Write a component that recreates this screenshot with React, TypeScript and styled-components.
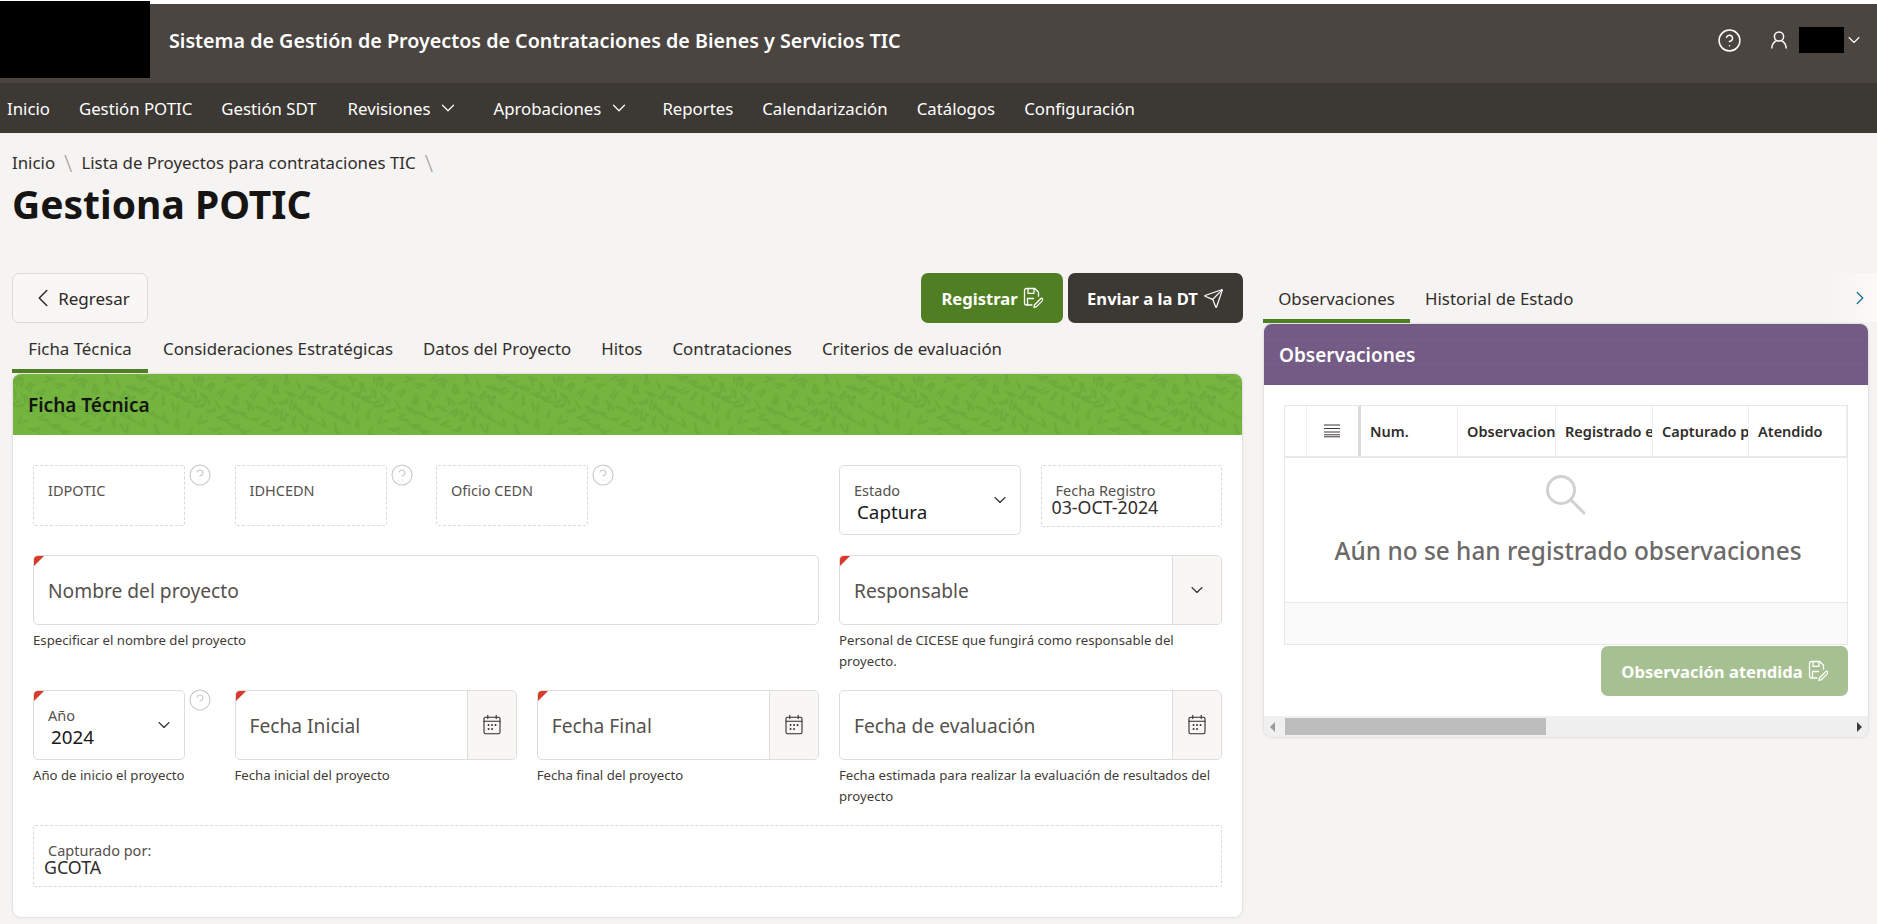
import { ReactNode } from "react";
import styled, { createGlobalStyle } from "styled-components";
import { ChevronDown, ChevronLeft, ChevronRight, CircleHelp, Send } from "lucide-react";

const font = `"Noto Sans", "Open Sans", Arial, sans-serif`;

const GlobalStyle = createGlobalStyle`
  html, body {
    margin: 0;
    background: #fff;
  }
  body {
    font-family: ${font};
    color: #1a1816;
    overflow: hidden;
  }
`;

const Page = styled.div`
  width: 1877px;
  height: 924px;
  padding-top: 4px;
  box-sizing: border-box;
  background: #fff;
  overflow: hidden;
`;

const Header = styled.header`
  height: 79px;
  background: #4a4540;
  display: flex;
  align-items: center;
  color: #fff;
`;

const Logo = styled.div`
  width: 150px;
  height: 77px;
  margin-top: -3px;
  align-self: flex-start;
  background: #000;
  flex: none;
`;

const AppTitle = styled.div`
  margin-left: 19px;
  font-size: 19.7px;
  font-weight: 600;
  flex: 1;
  margin-top: -7px;
`;

const UserArea = styled.div`
  display: flex;
  align-items: center;
  margin-top: -7px;
  padding-right: 13px;
`;

const HeaderHelp = styled.span`
  display: flex;
  margin-right: 28px;
`;

const UserName = styled.div`
  width: 45px;
  height: 26px;
  margin: 0 0 0 11px;
  background: #000;
`;

const Nav = styled.nav`
  height: 50px;
  background: #3c3833;
  display: flex;
  align-items: center;
  padding-left: 7px;
  gap: 29px;
  color: #fff;
  font-size: 16.8px;
`;

const NavItem = styled.span<{ $hasMenu?: boolean }>`
  display: flex;
  align-items: center;
  gap: 7px;
  margin-left: ${({ $hasMenu }) => ($hasMenu ? "2px" : "0")};
  padding-right: ${({ $hasMenu }) => ($hasMenu ? "3px" : "0")};
`;

const Content = styled.main`
  height: 791px;
  background: #f5f4f2;
  padding-left: 12px;
  padding-top: 19px;
  box-sizing: border-box;
`;

const Breadcrumb = styled.div`
  display: flex;
  align-items: center;
  gap: 9px;
  font-size: 16.85px;
  line-height: 22px;
  color: #312d2a;
`;

const Separator = styled.span`
  color: #a8a5a1;
  font-size: 24px;
  font-weight: 300;
`;

const PageTitle = styled.h1`
  margin: 4px 0 0;
  font-size: 39px;
  line-height: 52px;
  font-weight: 700;
  color: #161513;
`;

const Columns = styled.div`
  display: flex;
  gap: 20px;
  margin-top: 43px;
`;

const LeftColumn = styled.section`
  width: 1231px;
  flex: none;
`;

const RightColumn = styled.section`
  flex: 1;
  min-width: 0;
`;

const Actions = styled.div`
  display: flex;
  align-items: center;
  gap: 5px;
  height: 50px;
`;

const Button = styled.button<{ $variant?: "plain" | "green" | "dark" | "disabled" }>`
  height: 50px;
  box-sizing: border-box;
  border-radius: 7px;
  display: flex;
  align-items: center;
  justify-content: center;
  gap: 5px;
  font-family: ${font};
  font-size: ${({ $variant }) => ($variant === "plain" ? "17px" : "16.6px")};
  font-weight: ${({ $variant }) => ($variant === "plain" ? 400 : 700)};
  color: ${({ $variant }) => ($variant === "plain" ? "#2c2825" : "#fff")};
  border: ${({ $variant }) => ($variant === "plain" ? "1px solid #dcdad7" : "none")};
  background: ${({ $variant }) =>
    $variant === "green"
      ? "#4f7f22"
      : $variant === "dark"
        ? "#3c3833"
        : $variant === "disabled"
          ? "#a6c092"
          : "#f8f7f5"};
`;

const BackButton = styled(Button)`
  width: 136px;
  margin-right: auto;
  gap: 0;
  padding-right: 8px;
`;

const RegisterButton = styled(Button)`
  width: 142px;
`;

const SendButton = styled(Button)`
  width: 175px;
`;

const Tabs = styled.div`
  display: flex;
  height: 50px;
`;

const Tab = styled.div<{ $active?: boolean; $minWidth?: number }>`
  height: 50px;
  min-width: ${({ $minWidth }) => $minWidth ?? 0}px;
  box-sizing: border-box;
  display: flex;
  align-items: center;
  justify-content: center;
  padding: 5px 15px 0;
  flex: none;
  font-size: 16.85px;
  color: #312d2a;
  border-bottom: 4px solid ${({ $active }) => ($active ? "#4f7f22" : "transparent")};
`;

const Card = styled.div<{ $width?: number }>`
  margin: 1px 1px 0 1px;
  width: ${({ $width }) => ($width ? `${$width}px` : "auto")};
  background: #fff;
  border-radius: 8px;
  box-shadow: 0 0 3px rgba(0, 0, 0, 0.18);
  overflow: hidden;
`;

const CardHeader = styled.div<{ $tone: "green" | "purple" }>`
  position: relative;
  height: 61px;
  display: flex;
  align-items: center;
  padding-left: 15px;
  font-size: 19px;
  font-weight: 600;
  color: ${({ $tone }) => ($tone === "green" ? "#161513" : "#fff")};
  background: ${({ $tone }) => ($tone === "green" ? "#74b53f" : "#755c86")};
`;

const HeaderPattern = styled.svg`
  position: absolute;
  inset: 0;
  width: 100%;
  height: 100%;
`;

const HeaderText = styled.span`
  position: relative;
`;

const Form = styled.div`
  padding: 30px 20px;
  display: flex;
  flex-direction: column;
  gap: 18px;
`;

const FormRow = styled.div<{ $first?: boolean }>`
  display: grid;
  grid-template-columns: repeat(12, 1fr);
  column-gap: 20px;
  padding-bottom: ${({ $first }) => ($first ? "2px" : "0")};
`;

const Cell = styled.div<{ $span: number; $start?: number }>`
  grid-column: ${({ $start, $span }) => ($start ? `${$start} / span ${$span}` : `span ${$span}`)};
  display: flex;
  flex-direction: column;
  min-width: 0;
`;

const WithHelp = styled.div`
  display: flex;
  gap: 3px;
`;

const HelpMark = styled.span`
  color: #c9c7c4;
  display: flex;
  width: 24px;
  height: 24px;
  margin-top: -2px;
  flex: none;
`;

const ReadOnlyBox = styled.div<{ $width?: string; $height: number }>`
  width: ${({ $width }) => $width ?? "100%"};
  height: ${({ $height }) => $height}px;
  box-sizing: border-box;
  border: 1px dashed #dcdad7;
  border-radius: 2px;
  padding: 15px 14px 0;
  flex: none;
`;

const SmallLabel = styled.div`
  font-size: 14.5px;
  line-height: 18px;
  color: #55514d;
`;

const ReadOnlyValue = styled.div`
  font-size: 17.8px;
  line-height: 16px;
  color: #312d2a;
  margin-left: -4px;
`;

const InputBox = styled.div<{ $required?: boolean; $width?: string }>`
  position: relative;
  width: ${({ $width }) => $width ?? "100%"};
  height: 70px;
  box-sizing: border-box;
  border: 1px solid #dfddda;
  border-radius: 5px;
  display: flex;
  background: #fff;
  flex: none;
  overflow: hidden;

  &::before {
    content: "";
    display: ${({ $required }) => ($required ? "block" : "none")};
    position: absolute;
    top: -1px;
    left: -1px;
    border-style: solid;
    border-width: 12px 12px 0 0;
    border-color: #d8392a transparent transparent transparent;
  }
`;

const Placeholder = styled.div`
  flex: 1;
  display: flex;
  align-items: center;
  padding-left: 14px;
  font-size: 19.2px;
  color: #55514d;
`;

const Addon = styled.div`
  width: 49px;
  box-sizing: border-box;
  flex: none;
  display: flex;
  align-items: center;
  justify-content: center;
  background: #f8f7f5;
  border-left: 1px solid #dfddda;
  color: #312d2a;
`;

const SelectBody = styled.div`
  flex: 1;
  padding: 15px 0 0 14px;
`;

const SelectValue = styled.div`
  font-size: 18.8px;
  line-height: 24px;
  color: #1a1816;
  margin: 1px 0 0 3px;
`;

const SelectChevron = styled.div`
  width: 40px;
  display: flex;
  align-items: center;
  justify-content: center;
  color: #312d2a;
`;

const Hint = styled.div`
  padding-top: 5px;
  font-size: 13.2px;
  line-height: 21px;
  color: #3f3b37;
  min-height: 42px;
`;

const TabsEnd = styled.div`
  margin-left: auto;
  width: 50px;
  height: 49px;
  box-sizing: border-box;
  padding-left: 22px;
  display: flex;
  align-items: center;
  background: linear-gradient(to right, #f5f4f2, #fbfaf9);
  color: #1b6e95;
`;

const TablePanel = styled.div`
  padding: 20px 20px 0;
`;

const Table = styled.div`
  border: 1px solid #e9e8e6;
  height: 240px;
  box-sizing: border-box;
  display: flex;
  flex-direction: column;
`;

const HeaderRow = styled.div`
  display: flex;
  height: 52px;
  flex: none;
  border-bottom: 2px solid #e9e8e6;
  box-sizing: border-box;
`;

const Col = styled.div<{ $width: number; $frozen?: boolean }>`
  width: ${({ $width }) => $width}px;
  flex: none;
  box-sizing: border-box;
  display: flex;
  align-items: center;
  padding-left: 9px;
  font-size: 14.5px;
  font-weight: 600;
  color: #312d2a;
  overflow: hidden;
  white-space: nowrap;
  border-right: ${({ $frozen }) => ($frozen ? "3px solid #dddbd9" : "1px solid #efeeec")};
`;

const MenuCol = styled(Col)`
  justify-content: center;
  padding-left: 0;
  padding-right: 2px;
  color: #3f3b37;
`;

const EmptyState = styled.div`
  flex: 1;
  display: flex;
  flex-direction: column;
  align-items: center;
  padding-top: 16px;
  gap: 18px;
  color: #6b6a68;
  font-size: 24.4px;
  font-weight: 500;
`;

const EmptyMessage = styled.span`
  padding-left: 4px;
`;

const TableFooter = styled.div`
  height: 41px;
  flex: none;
  background: #fafafa;
  border-top: 1px solid #e9e8e6;
`;

const TableActions = styled.div`
  display: flex;
  justify-content: flex-end;
  margin-top: 1px;
`;

const DoneButton = styled(Button)`
  width: 247px;
`;

const ScrollBar = styled.div`
  margin-top: 20px;
  height: 21px;
  background: #f0f0f0;
  display: flex;
  align-items: center;
  justify-content: space-between;
  padding: 0 6px;
  position: relative;
`;

const ScrollThumb = styled.div`
  position: absolute;
  left: 21px;
  top: 2px;
  width: 261px;
  height: 17px;
  background: #bdbdbd;
`;

const ScrollArrow = styled.span<{ $right?: boolean }>`
  border-style: solid;
  border-width: 5px 0 5px 5px;
  border-color: transparent transparent transparent ${({ $right }) => ($right ? "#3a3a3a" : "#9a9a9a")};
  transform: ${({ $right }) => ($right ? "none" : "scaleX(-1)")};
`;

// leaf texture of the green region header
const leaves = Array.from({ length: 150 }, (_, i) => {
  const x = (i * 37.3) % 180;
  const y = (i * 23.7 + (i % 7) * 11) % 62;
  const a = (Math.sin(x / 28) + Math.cos(y / 15)) * 1.4 + (i % 3) * 0.35;
  return {
    x1: x,
    y1: y,
    x2: x + Math.cos(a) * 8,
    y2: y + Math.sin(a) * 8,
  };
});

function GreenTexture() {
  return (
    <HeaderPattern aria-hidden="true">
      <defs>
        <pattern id="leafTile" width="180" height="62" patternUnits="userSpaceOnUse">
          {leaves.map((l, i) => (
            <line key={i} {...l} stroke="#6bac3b" strokeWidth="2.4" strokeLinecap="round" />
          ))}
        </pattern>
      </defs>
      <rect width="100%" height="100%" fill="url(#leafTile)" />
    </HeaderPattern>
  );
}

function PurpleTexture() {
  return (
    <HeaderPattern aria-hidden="true">
      <defs>
        <pattern id="dotTile" width="3" height="6" patternUnits="userSpaceOnUse">
          <circle cx="1" cy="1" r="0.8" fill="#6c5480" />
        </pattern>
      </defs>
      <rect width="100%" height="100%" fill="url(#dotTile)" />
    </HeaderPattern>
  );
}

function SaveEditIcon() {
  return (
    <svg width="20" height="22" viewBox="0 0 20 22" fill="none" stroke="currentColor" strokeWidth="1.3" strokeLinejoin="round" strokeLinecap="round">
      <path d="M9 18H3.2A1.7 1.7 0 0 1 1.5 16.3V3.2A1.7 1.7 0 0 1 3.2 1.5h8.6l3.7 3.7v4" />
      <path d="M5 1.7v4.6h6V1.7" />
      <path d="M4.5 17.5v-6h6" />
      <path d="M11 20.5l.6-2.8 6-6a1.3 1.3 0 0 1 1.9 1.9l-6 6z" />
    </svg>
  );
}

function CalendarIcon() {
  return (
    <svg width="20" height="22" viewBox="0 0 20 22" fill="none" stroke="currentColor" strokeWidth="1.1" strokeLinecap="round">
      <rect x="2" y="3.2" width="16" height="16.6" rx="1.6" />
      <path d="M2 7.2h16M5.8 1.2v3.4M14.2 1.2v3.4" />
      <path strokeWidth="1.8" d="M6.5 11h.1M10 11h.1M13.5 11h.1M6.5 15h.1M10 15h.1" />
    </svg>
  );
}

function UserIcon() {
  return (
    <svg width="18" height="21" viewBox="0 0 18 21" fill="none" stroke="currentColor" strokeWidth="1.5" strokeLinecap="round">
      <circle cx="9" cy="6.5" r="4.6" />
      <path d="M6.6 10.6C3.6 12 2 14.5 1.8 18M11.4 10.6c3 1.4 4.6 3.9 4.8 7.4" />
    </svg>
  );
}

function SearchIcon() {
  return (
    <svg width="44" height="42" viewBox="0 0 44 42" fill="none" stroke="#d2d1cf" strokeWidth="3" strokeLinecap="round">
      <circle cx="17" cy="16" r="13.5" />
      <path d="M27 26l13 13" />
    </svg>
  );
}

function ColumnsMenuIcon() {
  return (
    <svg width="16" height="14" viewBox="0 0 16 14" fill="none" stroke="currentColor" strokeWidth="1">
      <path d="M0 1h16M0 4.5h16M0 8h16M0 10.8h16M0 12.8h16" />
    </svg>
  );
}

function Help() {
  return (
    <HelpMark>
      <CircleHelp size={24} strokeWidth={1.1} />
    </HelpMark>
  );
}

function Chevron({ size = 20 }: { size?: number }) {
  return <ChevronDown size={size} strokeWidth={1.3} />;
}

function TextField({ label, required, addon, hint }: { label: string; required?: boolean; addon?: ReactNode; hint?: string }) {
  return (
    <>
      <InputBox $required={required}>
        <Placeholder>{label}</Placeholder>
        {addon && <Addon>{addon}</Addon>}
      </InputBox>
      {hint && <Hint>{hint}</Hint>}
    </>
  );
}

function IdField({ label }: { label: string }) {
  return (
    <Cell $span={2}>
      <WithHelp>
        <ReadOnlyBox $width="152px" $height={61}>
          <SmallLabel>{label}</SmallLabel>
        </ReadOnlyBox>
        <Help />
      </WithHelp>
    </Cell>
  );
}

export default function App() {
  return (
    <Page>
      <GlobalStyle />
      <Header>
        <Logo />
        <AppTitle>Sistema de Gestión de Proyectos de Contrataciones de Bienes y Servicios TIC</AppTitle>
        <UserArea>
          <HeaderHelp>
            <CircleHelp size={25} strokeWidth={1.4} />
          </HeaderHelp>
          <UserIcon />
          <UserName />
          <Chevron />
        </UserArea>
      </Header>
      <Nav>
        <NavItem>Inicio</NavItem>
        <NavItem>Gestión POTIC</NavItem>
        <NavItem>Gestión SDT</NavItem>
        <NavItem $hasMenu>
          Revisiones <Chevron size={22} />
        </NavItem>
        <NavItem $hasMenu>
          Aprobaciones <Chevron size={22} />
        </NavItem>
        <NavItem>Reportes</NavItem>
        <NavItem>Calendarización</NavItem>
        <NavItem>Catálogos</NavItem>
        <NavItem>Configuración</NavItem>
      </Nav>
      <Content>
        <Breadcrumb>
          <span>Inicio</span>
          <Separator>\</Separator>
          <span>Lista de Proyectos para contrataciones TIC</span>
          <Separator>\</Separator>
        </Breadcrumb>
        <PageTitle>Gestiona POTIC</PageTitle>
        <Columns>
          <LeftColumn>
            <Actions>
              <BackButton $variant="plain">
                <ChevronLeft size={30} strokeWidth={1.2} />
                Regresar
              </BackButton>
              <RegisterButton $variant="green">
                Registrar <SaveEditIcon />
              </RegisterButton>
              <SendButton $variant="dark">
                Enviar a la DT <Send size={21} strokeWidth={1.4} />
              </SendButton>
            </Actions>
            <Tabs>
              <Tab $active $minWidth={136}>Ficha Técnica</Tab>
              <Tab>Consideraciones Estratégicas</Tab>
              <Tab>Datos del Proyecto</Tab>
              <Tab>Hitos</Tab>
              <Tab>Contrataciones</Tab>
              <Tab>Criterios de evaluación</Tab>
            </Tabs>
            <Card>
              <CardHeader $tone="green">
                <GreenTexture />
                <HeaderText>Ficha Técnica</HeaderText>
              </CardHeader>
              <Form>
                <FormRow $first>
                  <IdField label="IDPOTIC" />
                  <IdField label="IDHCEDN" />
                  <IdField label="Oficio CEDN" />
                  <Cell $span={2} $start={9}>
                    <InputBox>
                      <SelectBody>
                        <SmallLabel>Estado</SmallLabel>
                        <SelectValue>Captura</SelectValue>
                      </SelectBody>
                      <SelectChevron>
                        <Chevron />
                      </SelectChevron>
                    </InputBox>
                  </Cell>
                  <Cell $span={2}>
                    <ReadOnlyBox $height={62}>
                      <SmallLabel>Fecha Registro</SmallLabel>
                      <ReadOnlyValue>03-OCT-2024</ReadOnlyValue>
                    </ReadOnlyBox>
                  </Cell>
                </FormRow>
                <FormRow>
                  <Cell $span={8}>
                    <TextField label="Nombre del proyecto" required hint="Especificar el nombre del proyecto" />
                  </Cell>
                  <Cell $span={4}>
                    <TextField
                      label="Responsable"
                      required
                      addon={<Chevron />}
                      hint="Personal de CICESE que fungirá como responsable del proyecto."
                    />
                  </Cell>
                </FormRow>
                <FormRow>
                  <Cell $span={2}>
                    <WithHelp>
                      <InputBox $required $width="152px">
                        <SelectBody>
                          <SmallLabel>Año</SmallLabel>
                          <SelectValue>2024</SelectValue>
                        </SelectBody>
                        <SelectChevron>
                          <Chevron />
                        </SelectChevron>
                      </InputBox>
                      <Help />
                    </WithHelp>
                    <Hint>Año de inicio el proyecto</Hint>
                  </Cell>
                  <Cell $span={3}>
                    <TextField label="Fecha Inicial" required addon={<CalendarIcon />} hint="Fecha inicial del proyecto" />
                  </Cell>
                  <Cell $span={3}>
                    <TextField label="Fecha Final" required addon={<CalendarIcon />} hint="Fecha final del proyecto" />
                  </Cell>
                  <Cell $span={4}>
                    <TextField
                      label="Fecha de evaluación"
                      addon={<CalendarIcon />}
                      hint="Fecha estimada para realizar la evaluación de resultados del proyecto"
                    />
                  </Cell>
                </FormRow>
                <ReadOnlyBox $height={62}>
                  <SmallLabel>Capturado por:</SmallLabel>
                  <ReadOnlyValue>GCOTA</ReadOnlyValue>
                </ReadOnlyBox>
              </Form>
            </Card>
          </LeftColumn>
          <RightColumn>
            <Tabs>
              <Tab $active $minWidth={147}>Observaciones</Tab>
              <Tab>Historial de Estado</Tab>
              <TabsEnd>
                <ChevronRight size={22} strokeWidth={1.4} />
              </TabsEnd>
            </Tabs>
            <Card $width={604}>
              <CardHeader $tone="purple">
                <PurpleTexture />
                <HeaderText>Observaciones</HeaderText>
              </CardHeader>
              <TablePanel>
                <Table>
                  <HeaderRow>
                    <Col $width={22} />
                    <MenuCol $width={54} $frozen>
                      <ColumnsMenuIcon />
                    </MenuCol>
                    <Col $width={97}>Num.</Col>
                    <Col $width={98}>Observaciones</Col>
                    <Col $width={97}>Registrado el</Col>
                    <Col $width={96}>Capturado por</Col>
                    <Col $width={98}>Atendido</Col>
                  </HeaderRow>
                  <EmptyState>
                    <SearchIcon />
                    <EmptyMessage>Aún no se han registrado observaciones</EmptyMessage>
                  </EmptyState>
                  <TableFooter />
                </Table>
                <TableActions>
                  <DoneButton $variant="disabled">
                    Observación atendida <SaveEditIcon />
                  </DoneButton>
                </TableActions>
              </TablePanel>
              <ScrollBar>
                <ScrollArrow />
                <ScrollThumb />
                <ScrollArrow $right />
              </ScrollBar>
            </Card>
          </RightColumn>
        </Columns>
      </Content>
    </Page>
  );
}
